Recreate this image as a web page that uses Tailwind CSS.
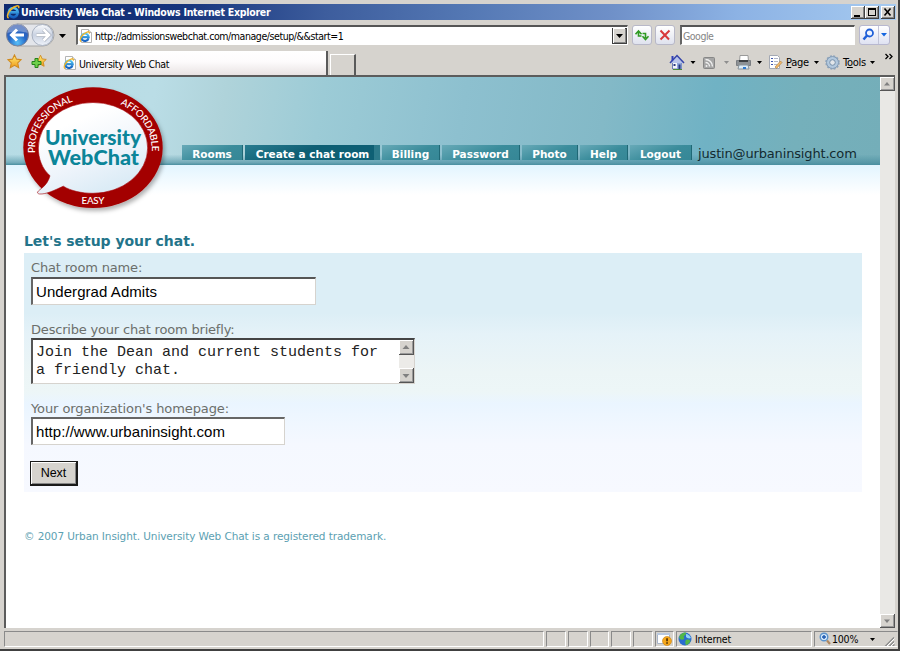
<!DOCTYPE html>
<html lang="en">
<head>
<meta charset="utf-8">
<title>University Web Chat - Windows Internet Explorer</title>
<script src="https://cdn.jsdelivr.net/npm/@tailwindcss/browser@4"></script>
</head>
<body class="h-[651px] w-[900px] overflow-hidden bg-[#d6d3ce]">
<svg class="absolute h-0 w-0">
  <defs>
    <linearGradient id="eb" x1="0" y1="0" x2="0" y2="1"><stop offset="0" stop-color="#55c8f5"/><stop offset="1" stop-color="#1560c0"/></linearGradient>
    <linearGradient id="star" x1="0" y1="0" x2="0" y2="1"><stop offset="0" stop-color="#fff07a"/><stop offset="1" stop-color="#f09a18"/></linearGradient>
    <symbol id="ie" viewBox="0 0 14 14">
      <path d="M11.600 8.900A4.500 4.500 0 1 1 11.800 7.400H4.200" fill="none" stroke="url(#eb)" stroke-width="2.600"/>
      <path d="M2.600 13C-.6 11.500 3.500 3.600 9.800 1.300c2.500-1 3.600-.2 2.700 1.900" fill="none" stroke="#f0b428" stroke-width="1.500"/>
    </symbol>
    <symbol id="iepage" viewBox="0 0 14 14">
      <path d="M2.500.5h7l3 3v10h-10z" fill="#fff" stroke="#b4b4b4"/><path d="M9.500.5v3h3" fill="#eee" stroke="#b4b4b4"/>
      <use href="#ie" x="0" y="2" width="11.500" height="11.500"/>
    </symbol>
    <symbol id="st" viewBox="0 0 14 14"><path d="M7 .8l1.900 4 4.300.5-3.200 3 .9 4.400L7 10.500l-3.900 2.200.9-4.400-3.200-3 4.300-.5z" fill="url(#star)" stroke="#d08a20" stroke-width="1"/></symbol>
  </defs>
</svg>
<div class="flex h-[651px] flex-col border-r-2 border-b-2 border-[#404040] bg-[#d6d3ce] pt-[4px]">
  <!-- title bar -->
  <div class="ml-1 mr-[2px] flex h-4 items-center bg-[linear-gradient(90deg,#0e2a70_0%,#16347c_20%,#3d5d9d_36%,#5478b4_52%,#6f90c8_68%,#8cb2e4_82%,#a6caf0_100%)] pl-[2px] pr-[1px]">
    <svg class="mr-[1px] h-[14px] w-[14px]"><use href="#ie" width="14" height="14"/></svg>
    <span class="whitespace-nowrap font-['DejaVu_Sans_Condensed','DejaVu_Sans',sans-serif] text-[10.5px] leading-4 font-bold tracking-[-0.27px] text-white">University Web Chat - Windows Internet Explorer</span>
    <div class="ml-auto flex">
      <svg class="h-[13px] w-[14px]" viewBox="0 0 14 13"><path d="M0 0h14v13H0z" fill="#404040"/><path d="M0 0h13v12H0z" fill="#fff"/><path d="M1 1h12v11H1z" fill="#868686"/><path d="M1 1h11v10H1z" fill="#d6d3ce"/><path d="M3 9h6v2H3z"/></svg>
      <svg class="h-[13px] w-[14px]" viewBox="0 0 14 13"><path d="M0 0h14v13H0z" fill="#404040"/><path d="M0 0h13v12H0z" fill="#fff"/><path d="M1 1h12v11H1z" fill="#868686"/><path d="M1 1h11v10H1z" fill="#d6d3ce"/><path d="M3 2.500h8M3.500 2v8M10.500 2v8M3 9.500h8" stroke="#000" stroke-width="1"/><path d="M3 2h8v2H3z"/></svg>
      <svg class="ml-[2px] h-[13px] w-[14px]" viewBox="0 0 14 13"><path d="M0 0h14v13H0z" fill="#404040"/><path d="M0 0h13v12H0z" fill="#fff"/><path d="M1 1h12v11H1z" fill="#868686"/><path d="M1 1h11v10H1z" fill="#d6d3ce"/><path d="M3.500 2.500l6 7M9.500 2.500l-6 7" stroke="#000" stroke-width="1.600"/></svg>
    </div>
  </div>
  <!-- address row -->
  <div class="flex h-[31px] items-start pl-1">
    <svg class="mt-[2px] h-7 w-[68px]" viewBox="4 22 68 28">
      <defs>
        <radialGradient id="bk" cx=".5" cy=".85" r=".8"><stop offset="0" stop-color="#58c0f8"/><stop offset=".5" stop-color="#2468c8"/><stop offset="1" stop-color="#3a5cae"/></radialGradient>
        <linearGradient id="fw" x1="0" y1="0" x2="0" y2="1"><stop offset="0" stop-color="#fafbfd"/><stop offset=".5" stop-color="#c9d2e2"/><stop offset="1" stop-color="#eef2f9"/></linearGradient>
      </defs>
      <path d="M17 24h26a11 11 0 0 1 0 22H17z" fill="#e3e5ea" stroke="#a8a8a8"/>
      <circle cx="17.500" cy="35" r="11" fill="url(#bk)" stroke="#7b8396"/>
      <path d="M7.500 33a10 9.500 0 0 1 20 0c-5-2-14-2-20 0z" fill="#fff" opacity=".3"/>
      <path d="M24 35H12M17 29.500L11.500 35l5.500 5.500" fill="none" stroke="#fff" stroke-width="3"/>
      <circle cx="42.500" cy="35" r="10.500" fill="url(#fw)" stroke="#a9b2c2"/>
      <path d="M36.500 35h12M43.500 29.500L49 35l-5.500 5.500" fill="none" stroke="#a9b0bd" stroke-width="4"/>
      <path d="M36.500 35h12M43.500 29.500L49 35l-5.500 5.500" fill="none" stroke="#fff" stroke-width="2.600"/>
      <path d="M59 34h7l-3.500 4z"/>
    </svg>
    <div class="ml-1 mt-[5px] flex h-5 w-[552px] items-center border-t-2 border-l-2 border-r border-b border-t-[#555] border-l-[#666] border-r-white border-b-white bg-white">
      <svg class="ml-[1px] h-[14px] w-[14px]"><use href="#iepage" width="14" height="14"/></svg>
      <span class="mt-px ml-[2px] whitespace-nowrap font-['DejaVu_Sans_Condensed','DejaVu_Sans',sans-serif] text-[10.5px] leading-4 tracking-[-0.43px] text-black">http://admissionswebchat.com/manage/setup/&amp;&amp;start=1</span>
      <svg class="ml-auto h-[16px] w-[15px]" viewBox="0 0 15 16"><path d="M0 0h15v16H0z" fill="#404040"/><path d="M1 0h12v15H1z" fill="#fff"/><path d="M2 1h12v14H2z" fill="#868686"/><path d="M2 1h11v13H2z" fill="#d6d3ce"/><path d="M4 6h7l-3.500 4z"/></svg>
    </div>
    <div class="ml-1 mt-[5px] flex h-5 w-[20px] items-center justify-center rounded-[3px] border border-[#b8b8c8] bg-[linear-gradient(#fff,#dfe2ee)]">
      <svg class="h-[14px] w-[16px]" viewBox="0 0 16 14"><path d="M7.500 8H4.500V4M1.500 6.200L4.500 3l3 3.200" fill="none" stroke="#2f9a22" stroke-width="1.600"/><path d="M8.500 5.500h3V10M8.500 8.300l3 3.200 3-3.200" fill="none" stroke="#2f9a22" stroke-width="1.600"/></svg>
    </div>
    <div class="ml-[3px] mt-[5px] flex h-5 w-[20px] items-center justify-center rounded-[3px] border border-[#b8b8c8] bg-[linear-gradient(#fff,#dfe2ee)]">
      <svg class="h-[12px] w-[12px]" viewBox="0 0 12 12"><path d="M1.500 1.500l8.500 9M10.500 1.500l-9 9" stroke="#d8383c" stroke-width="2"/></svg>
    </div>
    <div class="ml-[5px] mt-[5px] flex h-[20px] w-[175px] items-center border-t-2 border-l-2 border-r border-b border-t-[#555] border-l-[#666] border-r-white border-b-white bg-white">
      <span class="ml-[1px] mt-px font-['DejaVu_Sans_Condensed','DejaVu_Sans',sans-serif] text-[10.5px] leading-4 tracking-[-0.5px] text-[#858585]">Google</span>
    </div>
    <div class="ml-[4px] mt-[5px] flex h-[20px] w-[31px] items-center rounded-[3px] border border-[#b8b8d0] bg-[linear-gradient(#fff,#dfe2f2)]">
      <svg class="h-[18px] w-[29px]" viewBox="0 0 29 18"><circle cx="9.500" cy="7" r="3.500" fill="#eef4ff" stroke="#1f5fd8" stroke-width="1.800"/><path d="M7 9.500L3.500 13.500" stroke="#1f5fd8" stroke-width="2.500"/><path d="M18.500 0v18" stroke="#c2c4d8"/><path d="M21 7h6l-3 3.500z" fill="#1566e0"/></svg>
    </div>
  </div>
  <!-- tab row -->
  <div class="flex h-[24px] items-end pl-[6px]">
    <svg class="mb-[5px] h-[16px] w-[16px]"><use href="#st" x="1" y="0" width="15" height="15"/></svg>
    <svg class="mb-[5px] ml-[9px] h-[16px] w-[16px]"><use href="#st" x="3" y="0" width="13" height="14"/><path d="M4 4.500h3v3h3v3H7v3H4v-3H1v-3h3z" fill="#6fd04a" stroke="#25821c"/></svg>
    <div class="ml-[13px] flex h-[24px] w-[268px] items-center border-r-2 border-[#5a5a5a] bg-[linear-gradient(#fff_0%,#fdfbfc_45%,#e9e3e3_100%)]">
      <svg class="ml-[3px] h-[14px] w-[14px]"><use href="#iepage" width="14" height="14"/></svg>
      <span class="mt-[2px] ml-[2px] whitespace-nowrap font-['DejaVu_Sans_Condensed','DejaVu_Sans',sans-serif] text-[10.5px] leading-4 tracking-[-0.32px] text-black">University Web Chat</span>
    </div>
    <div class="ml-[2px] h-[21px] w-[26px] border-t border-l border-r-2 border-t-white border-l-white border-r-[#5a5a5a]"></div>
    <div class="ml-auto mr-[2px] flex h-[24px] items-start">
      <svg class="mt-[2px] h-[18px] w-[116px]" viewBox="668 53 116 18">
        <path d="M672.500 62h9v7h-9z" fill="#f4f6fc" stroke="#6c7fb5"/><path d="M677 62h4.500v7H677z" fill="#8fa6dc"/><path d="M670 63l7-7.500 7 7.500" fill="#b9c5ea" stroke="#3544a8" stroke-width="1.500"/><path d="M671.500 56h2v4l-2 2z" fill="#3040b8"/><path d="M678.500 64.500h2v4.500h-2z" fill="#283880"/><path d="M673.500 64h2v2h-2z" fill="#283880"/><path d="M673 69.500h9" stroke="#4a8a3a"/>
        <path d="M690.500 61h5l-2.500 3zM757 61h5l-2.500 3z"/><path d="M724 61h5l-2.500 3z" fill="#8e8e8e"/>
        <rect x="703.500" y="57.500" width="11" height="11" rx="1" fill="#a5a5a5" stroke="#878787"/><g fill="none" stroke="#f0f0f0" stroke-width="1.400"><path d="M705.500 62.500a4 4 0 0 1 4 4M705.500 59.500a7 7 0 0 1 7 7"/></g><circle cx="706.500" cy="66" r="1" fill="#f0f0f0"/>
        <path d="M740 55.500h8l.5 6h-9z" fill="#fff" stroke="#9a9a9a"/><path d="M736.500 60.500h14v5h-14z" fill="#8d9195" stroke="#7a7e83"/><path d="M739 60h9v2h-9z" fill="#3d4044"/><path d="M739 65h9l1 4h-11z" fill="#dcecf8" stroke="#8a949c"/><path d="M743 67h3v2h-3z" fill="#2f7ad0"/>
        <path d="M769.500 55.500h8l2 2v11h-10z" fill="#fff" stroke="#a4a9b4"/><path d="M771 58.500h2M771 61.500h2M771 64.500h2" stroke="#4058b0"/><path d="M774 58.500h4M774 61.500h4M774 64.500h3" stroke="#b0b6c8"/><path d="M775 67l5.500-6 1.500 1.500-5.500 6z" fill="#f2b868" stroke="#a87838" stroke-width=".6"/>
      </svg>
      <span class="ml-[2px] mt-[4px] w-[23px] font-['DejaVu_Sans_Condensed','DejaVu_Sans',sans-serif] text-[11px] leading-4 tracking-[-0.25px] text-black"><u>P</u>age</span>
      <svg class="mt-[2px] h-[18px] w-[34px]" viewBox="808 53 34 18"><path d="M813 61h5l-2.500 3z"/><circle cx="831.500" cy="62.500" r="6" fill="#b2c8de" stroke="#8199b2"/><circle cx="831.500" cy="62.500" r="6.500" fill="none" stroke="#8ba2bb" stroke-width="1.500" stroke-dasharray="2 1.400"/><circle cx="831.500" cy="62.500" r="2.800" fill="#e2e6ea" stroke="#7790aa"/></svg>
      <span class="mt-[4px] w-[23px] font-['DejaVu_Sans_Condensed','DejaVu_Sans',sans-serif] text-[11px] leading-4 tracking-[-0.25px] text-black">T<u>o</u>ols</span>
      <svg class="h-[20px] w-[30px]" viewBox="866 51 30 20"><path d="M870 61h5l-2.500 3z"/><path d="M885.500 54l2.500 2.500-2.500 2.500M889.500 54l2.500 2.500-2.500 2.500" fill="none" stroke="#000" stroke-width="1.300"/></svg>
    </div>
  </div>
  <!-- viewport -->
  <div class="ml-1 mr-[3px] flex h-[553px] border-t-2 border-l-2 border-[#5c5c5c] bg-white">
    <div class="flex flex-1 flex-col">
      <div class="flex h-[88px] flex-col justify-end bg-[linear-gradient(180deg,transparent_0%,transparent_88%,#3f869988_97%,#4a8fa0_100%),linear-gradient(100deg,#b6dce5_0%,#badde6_17%,#afd3da_25%,#9ccbd6_36%,#8dc0cf_52%,#83b9c7_68%,#70b2c4_80%,#75b0bb_90%,#74aeb9_100%)]">
        <div class="flex h-[20px] items-start gap-[2px] pl-[176px] font-['DejaVu_Sans',Verdana,sans-serif] text-[10.5px] leading-[18px] font-bold text-white">
          <a class="flex h-[15px] w-[61px] justify-center border-r border-[#1f6876] bg-[linear-gradient(160deg,#68aab8,#3a8c9b_55%,#368796)]"><span>Rooms</span></a>
          <a class="flex h-[15px] w-[135px] justify-center border-r-[6px] border-[#2c7a8b] bg-[linear-gradient(160deg,#287c90,#0e5f74_45%)] pl-[6px]"><span class="whitespace-nowrap">Create a chat room</span></a>
          <a class="flex h-[15px] w-[58px] justify-center border-r border-[#1f6876] bg-[linear-gradient(160deg,#68aab8,#3a8c9b_55%,#368796)]"><span>Billing</span></a>
          <a class="flex h-[15px] w-[78px] justify-center border-r border-[#1f6876] bg-[linear-gradient(160deg,#68aab8,#3a8c9b_55%,#368796)]"><span>Password</span></a>
          <a class="flex h-[15px] w-[56px] justify-center border-r border-[#1f6876] bg-[linear-gradient(160deg,#68aab8,#3a8c9b_55%,#368796)]"><span>Photo</span></a>
          <a class="flex h-[15px] w-[48px] justify-center border-r border-[#1f6876] bg-[linear-gradient(160deg,#68aab8,#3a8c9b_55%,#368796)]"><span>Help</span></a>
          <a class="flex h-[15px] w-[62px] justify-center border-r border-[#1f6876] bg-[linear-gradient(160deg,#68aab8,#3a8c9b_55%,#368796)]"><span>Logout</span></a>
          <span class="ml-[4px] text-[13px] leading-[17px] font-normal tracking-[-0.16px] text-[#122a30]">justin@urbaninsight.com</span>
        </div>
      </div>
      <div class="h-[30px] bg-[linear-gradient(#e2f5ff,#f1faff_50%,#fff)]"></div>
      <main class="flex flex-col items-start pl-[18px] font-['DejaVu_Sans',Verdana,sans-serif]">
        <h1 class="mt-[36px] text-[14px] leading-[20px] font-bold tracking-[-0.05px] whitespace-nowrap text-[#23748a]">Let's setup your chat.</h1>
        <form class="mt-[2px] flex h-[239px] w-[838px] flex-col items-start bg-[linear-gradient(#dceef6_0%,#dceef6_25%,#e5f2f8_34%,#ecf5f6_50%,#edf6f7_58%,#eaf5ff_63%,#f0f7ff_72%,#f5f8ff_80%,#f7f9ff_100%)] pt-[7px] pl-[7px] text-[13px] leading-4 tracking-[-0.16px] text-[#6b6f6b]">
          <label>Chat room name:</label>
          <div class="mt-[1px] flex h-[28px] w-[285px] items-center border-t-2 border-l-2 border-r border-b border-t-[#555] border-l-[#666] border-r-[#d6d3ce] border-b-[#d6d3ce] bg-white pl-[3px]"><span class="font-['Liberation_Sans',Arial,sans-serif] text-[15px] tracking-[0.06px] text-black">Undergrad Admits</span></div>
          <label class="mt-[17px] tracking-[-0.19px]">Describe your chat room briefly:</label>
          <div class="flex h-[46px] w-[384px] border-t-2 border-l-2 border-r border-b border-t-[#444] border-l-[#555] border-r-[#d6d3ce] border-b-[#d6d3ce] bg-white pl-[3px]">
            <p class="mt-[4px] flex-1 font-['Liberation_Mono','Courier_New',monospace] text-[15px] leading-[18px] tracking-normal whitespace-nowrap text-[#222]">Join the Dean and current students for<br>a friendly chat.</p>
            <div class="flex w-[15px] flex-col justify-between bg-[#ecebe8]">
              <svg class="h-[15px] w-[15px]" viewBox="0 0 15 15"><path d="M0 0h15v15H0z" fill="#555"/><path d="M0 0h14v14H0z" fill="#fff"/><path d="M1 1h13v13H1z" fill="#999"/><path d="M1 1h12v12H1z" fill="#d6d3ce"/><path d="M3.500 9h7L7 5z" fill="#808080"/></svg>
              <svg class="h-[15px] w-[15px]" viewBox="0 0 15 15"><path d="M0 0h15v15H0z" fill="#555"/><path d="M0 0h14v14H0z" fill="#fff"/><path d="M1 1h13v13H1z" fill="#999"/><path d="M1 1h12v12H1z" fill="#d6d3ce"/><path d="M3.500 6h7L7 10z" fill="#808080"/></svg>
            </div>
          </div>
          <label class="mt-[17px] tracking-[-0.1px]">Your organization's homepage:</label>
          <div class="flex h-[28px] w-[254px] items-center border-t-2 border-l-2 border-r border-b border-t-[#666] border-l-[#666] border-r-[#d6d3ce] border-b-[#d6d3ce] bg-white pl-[3px]"><span class="font-['Liberation_Sans',Arial,sans-serif] text-[15px] tracking-[0.05px] text-black">http://www.urbaninsight.com</span></div>
          <button type="button" class="-ml-px mt-[16px] flex h-[25px] w-[48px] items-center justify-center border-t border-l border-r-2 border-b-2 border-[#1a1a1a] bg-[#d6d3ce] shadow-[inset_1px_1px_0_#fff,inset_-1px_-1px_0_#868686]"><span class="font-['Liberation_Sans',Arial,sans-serif] text-[12.5px] tracking-normal text-black">Next</span></button>
        </form>
        <p class="mt-[36px] text-[10.5px] leading-4 tracking-[-0.09px] whitespace-nowrap text-[#5c9fb2]">© 2007 Urban Insight. University Web Chat is a registered trademark.</p>
      </main>
    </div>
    <div class="flex w-[15px] flex-col justify-between bg-[#e9e8e5]">
      <svg class="h-[14px] w-[15px]" viewBox="0 0 15 14"><path d="M0 0h15v14H0z" fill="#555"/><path d="M0 0h14v13H0z" fill="#fff"/><path d="M1 1h13v12H1z" fill="#999"/><path d="M1 1h12v11H1z" fill="#d6d3ce"/><path d="M4 8.500h6L7 5z" fill="#808080"/></svg>
      <svg class="h-[14px] w-[15px]" viewBox="0 0 15 14"><path d="M0 0h15v14H0z" fill="#555"/><path d="M0 0h14v13H0z" fill="#fff"/><path d="M1 1h13v12H1z" fill="#999"/><path d="M1 1h12v11H1z" fill="#d6d3ce"/><path d="M4 5.500h6L7 9z" fill="#808080"/></svg>
    </div>
  </div>
  <!-- status bar -->
  <div class="ml-1 mt-[3px] flex h-[16px] gap-[2px] font-['DejaVu_Sans_Condensed','DejaVu_Sans',sans-serif] text-[10.5px] leading-[15px] text-black">
    <div class="w-[540px] border border-t-[#8a8a8a] border-l-[#8a8a8a] border-r-white border-b-white"></div>
    <div class="w-[20px] border border-t-[#8a8a8a] border-l-[#8a8a8a] border-r-white border-b-white"></div>
    <div class="w-[20px] border border-t-[#8a8a8a] border-l-[#8a8a8a] border-r-white border-b-white"></div>
    <div class="w-[19px] border border-t-[#8a8a8a] border-l-[#8a8a8a] border-r-white border-b-white"></div>
    <div class="w-[20px] border border-t-[#8a8a8a] border-l-[#8a8a8a] border-r-white border-b-white"></div>
    <div class="w-[20px] border border-t-[#8a8a8a] border-l-[#8a8a8a] border-r-white border-b-white"></div>
    <div class="w-[19px] border border-t-[#8a8a8a] border-l-[#8a8a8a] border-r-white border-b-white">
      <svg class="h-[14px] w-[17px]" viewBox="0 0 17 14"><path d="M1.500 1.500h12v10h-12z" fill="#fff" stroke="#a8b4c8"/><path d="M1 1h13v2H1z" fill="#b9c9e0"/><circle cx="11" cy="9" r="4.500" fill="#f5a81c" stroke="#c87f10" stroke-width=".6"/><path d="M10.300 6.300h1.500v3h-1.500zM10.300 10.300h1.500v1.500h-1.500z" fill="#402000"/></svg>
    </div>
    <div class="flex w-[136px] border border-t-[#8a8a8a] border-l-[#8a8a8a] border-r-white border-b-white">
      <svg class="ml-[1px] h-[14px] w-[14px]" viewBox="0 0 14 14"><circle cx="7" cy="7" r="6.500" fill="#2a6cd0"/><path d="M2 3c2-2 5-3 6-2 0 2-1 2-2 3s1 2 0 3-3 1-4 0-1-2 0-4zM8 8c2-1 4 0 4.500 1-1 2-3 4-4.500 4-1-1-1-4 0-5z" fill="#52b848"/><path d="M8 2c2 0 4 2 5 4-2 1-4 0-5-1z" fill="#8fd4f4"/></svg>
      <span class="ml-[3px] tracking-[-0.2px]">Internet</span>
    </div>
    <div class="flex flex-1 border border-t-[#8a8a8a] border-l-[#8a8a8a] border-r-transparent border-b-white">
      <svg class="ml-[4px] h-[14px] w-[13px]" viewBox="0 0 13 14"><circle cx="5" cy="5" r="3.800" fill="#d4e8fa" stroke="#5b93cc" stroke-width="1.400"/><path d="M5 3v4M3 5h4" stroke="#1c58b0" stroke-width="1.400"/><path d="M8 8.500l3 3.500" stroke="#b08860" stroke-width="2.200"/></svg>
      <span class="tracking-[-0.2px]">100%</span>
      <svg class="ml-auto h-[14px] w-[30px]" viewBox="868 632 30 14"><path d="M871 638h5l-2.500 3z"/><path d="M886 646.500l9-9M890 646.500l5-5M893.500 646.500l2-2" stroke="#8a8a8a" stroke-width="1.300"/><path d="M887.500 646.500l8-8M891.500 646.500l4-4" stroke="#fff"/></svg>
    </div>
  </div>
</div>
<!-- logo overlapping header and page -->
<svg class="absolute top-[80px] left-[18px] h-[140px] w-[152px]" viewBox="18 80 152 140">
  <defs>
    <linearGradient id="bub" x1="0" y1="0" x2=".5" y2="1"><stop offset=".3" stop-color="#fff"/><stop offset=".7" stop-color="#eef4fb"/><stop offset="1" stop-color="#dcecf6"/></linearGradient>
    <path id="ring" d="M35 153V148A58 49.300 0 0 1 93 98.700"/>
    <path id="ringR" d="M93 98.700A58.500 49.300 0 0 1 151.500 148V158"/>
    <filter id="sh" x="-20%" y="-20%" width="140%" height="140%"><feDropShadow dx="2" dy="3" stdDeviation="2" flood-color="#000" flood-opacity=".3"/></filter>
  </defs>
  <ellipse cx="93" cy="147.700" rx="69.700" ry="60.400" fill="#a30005" filter="url(#sh)"/>
  <path d="M50 175.700C42 169 38.300 158 38.300 148A54.700 45.500 0 0 1 147.700 148A54.700 45.500 0 0 1 93 193.300C82 193.300 71 191 63.300 186.200C55 190 46 194.500 39.500 194C35 193 39 190.500 42 188C46 185 49 180 50 175.700z" fill="url(#bub)" stroke="#a30005" stroke-width=".6"/>
  <g font-family="Lato, sans-serif" fill="#fff" font-size="9.800" font-weight="500">
    <text><textPath href="#ring" startOffset="0" textLength="69">PROFESSIONAL</textPath></text>
    <text><textPath href="#ringR" startOffset="28" textLength="60">AFFORDABLE</textPath></text>
    <text x="81.500" y="203.800" textLength="23">EASY</text>
  </g>
  <g font-family="Lato, sans-serif" fill="#0b8599" font-size="21.500" font-weight="900">
    <text x="45" y="145" textLength="96" lengthAdjust="spacingAndGlyphs">University</text>
    <text x="48" y="165" textLength="91" lengthAdjust="spacingAndGlyphs">WebChat</text>
  </g>
</svg>
</body>
</html>
